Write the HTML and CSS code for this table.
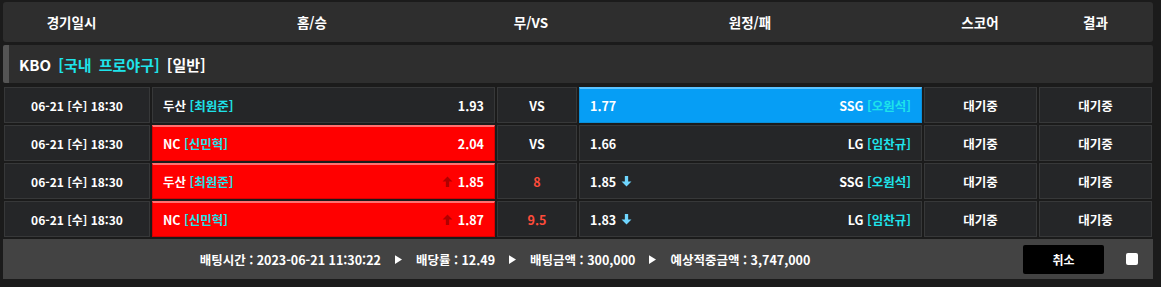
FILE: index.html
```html
<!DOCTYPE html>
<html lang="ko">
<head>
<meta charset="utf-8">
<link rel="stylesheet" href="styles.css">
</head>
<body>
<div class="wrap">
  <div class="head">
    <div>경기일시</div>
    <div>홈/승</div>
    <div>무/VS</div>
    <div>원정/패</div>
    <div>스코어</div>
    <div>결과</div>
  </div>
  <div class="league"><span>KBO <span class="cyan">[국내 프로야구]</span> [일반]</span></div>
  <div class="rows">
    <div class="row">
      <div class="cell date">06-21 [수] 18:30</div>
      <div class="cell team"><span>두산 <span class="cyan">[최원준]</span></span><span class="odd">1.93</span></div>
      <div class="cell mid">VS</div>
      <div class="cell team blue"><span class="odd">1.77</span><span>SSG <span class="cyan">[오원석]</span></span></div>
      <div class="cell mid">대기중</div>
      <div class="cell mid">대기중</div>
    </div>
    <div class="row">
      <div class="cell date">06-21 [수] 18:30</div>
      <div class="cell team red"><span>NC <span class="cyan">[신민혁]</span></span><span class="odd">2.04</span></div>
      <div class="cell mid">VS</div>
      <div class="cell team"><span class="odd">1.66</span><span>LG <span class="cyan">[임찬규]</span></span></div>
      <div class="cell mid">대기중</div>
      <div class="cell mid">대기중</div>
    </div>
    <div class="row">
      <div class="cell date">06-21 [수] 18:30</div>
      <div class="cell team red"><span>두산 <span class="cyan">[최원준]</span></span><span class="odd"><svg class="up" viewBox="0 0 10 10"><path d="M5 0.5 L9.5 5 H6.5 V10 H3.5 V5 H0.5 Z"/></svg>1.85</span></div>
      <div class="cell mid hl">8</div>
      <div class="cell team"><span class="odd">1.85<svg class="down" viewBox="0 0 10 10"><path d="M3.5 0 H6.5 V5 H9.5 L5 9.5 L0.5 5 H3.5 Z"/></svg></span><span>SSG <span class="cyan">[오원석]</span></span></div>
      <div class="cell mid">대기중</div>
      <div class="cell mid">대기중</div>
    </div>
    <div class="row">
      <div class="cell date">06-21 [수] 18:30</div>
      <div class="cell team red"><span>NC <span class="cyan">[신민혁]</span></span><span class="odd"><svg class="up" viewBox="0 0 10 10"><path d="M5 0.5 L9.5 5 H6.5 V10 H3.5 V5 H0.5 Z"/></svg>1.87</span></div>
      <div class="cell mid hl">9.5</div>
      <div class="cell team"><span class="odd">1.83<svg class="down" viewBox="0 0 10 10"><path d="M3.5 0 H6.5 V5 H9.5 L5 9.5 L0.5 5 H3.5 Z"/></svg></span><span>LG <span class="cyan">[임찬규]</span></span></div>
      <div class="cell mid">대기중</div>
      <div class="cell mid">대기중</div>
    </div>
  </div>
  <div class="foot">
    <div class="info">
      <span>배팅시간 : 2023-06-21 11:30:22</span>
      <svg class="tri" viewBox="0 0 8 10"><path d="M0 0 L8 5 L0 10 Z"/></svg>
      <span>배당률 : 12.49</span>
      <svg class="tri" viewBox="0 0 8 10"><path d="M0 0 L8 5 L0 10 Z"/></svg>
      <span>배팅금액 : 300,000</span>
      <svg class="tri" viewBox="0 0 8 10"><path d="M0 0 L8 5 L0 10 Z"/></svg>
      <span>예상적중금액 : 3,747,000</span>
    </div>
    <button class="cancel">취소</button>
    <span class="check"></span>
  </div>
</div>
</body>
</html>
```

FILE: styles.css
```css
* { box-sizing: border-box; }
html, body { margin: 0; padding: 0; }
body {
  background: #1b1b1b;
  font-family: "Noto Sans CJK KR", "Noto Sans", sans-serif;
  font-weight: bold;
  color: #fff;
  width: 1161px;
  height: 287px;
  overflow: hidden;
}
.wrap {
  width: 1150px;
  margin-left: 3px;
  padding-top: 2px;
}
.head {
  display: grid;
  grid-template-columns: 137px 344px 94px 344px 116px 115px;
  height: 40px;
  background: #2e2e2e;
  border-radius: 3px;
  font-size: 13.5px;
  align-items: center;
  text-align: center;
}
.league {
  margin-top: 3px;
  height: 38px;
  background: #2e2e2e;
  border-left: 6px solid #555;
  border-radius: 2px;
  padding-left: 10px;
  display: flex;
  align-items: center;
  font-size: 15px;
  word-spacing: 3px;
}
.cyan { color: #1ee3ea; }
.rows {
  margin: 4px 1px 0;
  display: flex;
  flex-direction: column;
  gap: 2px;
}
.row {
  display: grid;
  grid-template-columns: 146px 343px 80px 343px 113px 113px;
  gap: 2px;
  height: 36px;
}
.cell {
  background: #252628;
  border: 1px solid #373839;
  display: flex;
  align-items: center;
  font-size: 12.5px;
}
.date { font-size: 12px; }
.date, .mid { justify-content: center; }
.team {
  justify-content: space-between;
  padding: 0 10px;
}
.odd { display: flex; align-items: center; }
.red {
  background: #ff0000;
  border-color: #d40000;
  border-top: 2px solid #ff7070;
}
.blue {
  background: #069ef5;
  border-color: #0b8fd8;
  border-top: 2px solid #5cc3ff;
}
.hl { color: #ff4b3a; }
.up { width: 11px; height: 11px; fill: #b00000; margin-right: 5px; }
.down { width: 11px; height: 11px; fill: #6fd6ff; margin-left: 5px; }
.foot {
  margin-top: 2px;
  height: 40px;
  background: #434343;
  display: flex;
  align-items: center;
  padding-right: 15px;
}
.info {
  flex: 1;
  display: flex;
  justify-content: center;
  align-items: center;
  font-size: 12.5px;
  gap: 14px;
  padding-right: 16px;
}
.tri { width: 7px; height: 9px; fill: #fff; }
.cancel {
  width: 81px;
  height: 29px;
  background: #000;
  color: #fff;
  border: 0;
  border-radius: 2px;
  font-family: inherit;
  font-weight: bold;
  font-size: 12px;
  margin-right: 22px;
  padding: 0;
}
.check {
  width: 12px;
  height: 12px;
  background: #fff;
  border-radius: 2px;
}
```
